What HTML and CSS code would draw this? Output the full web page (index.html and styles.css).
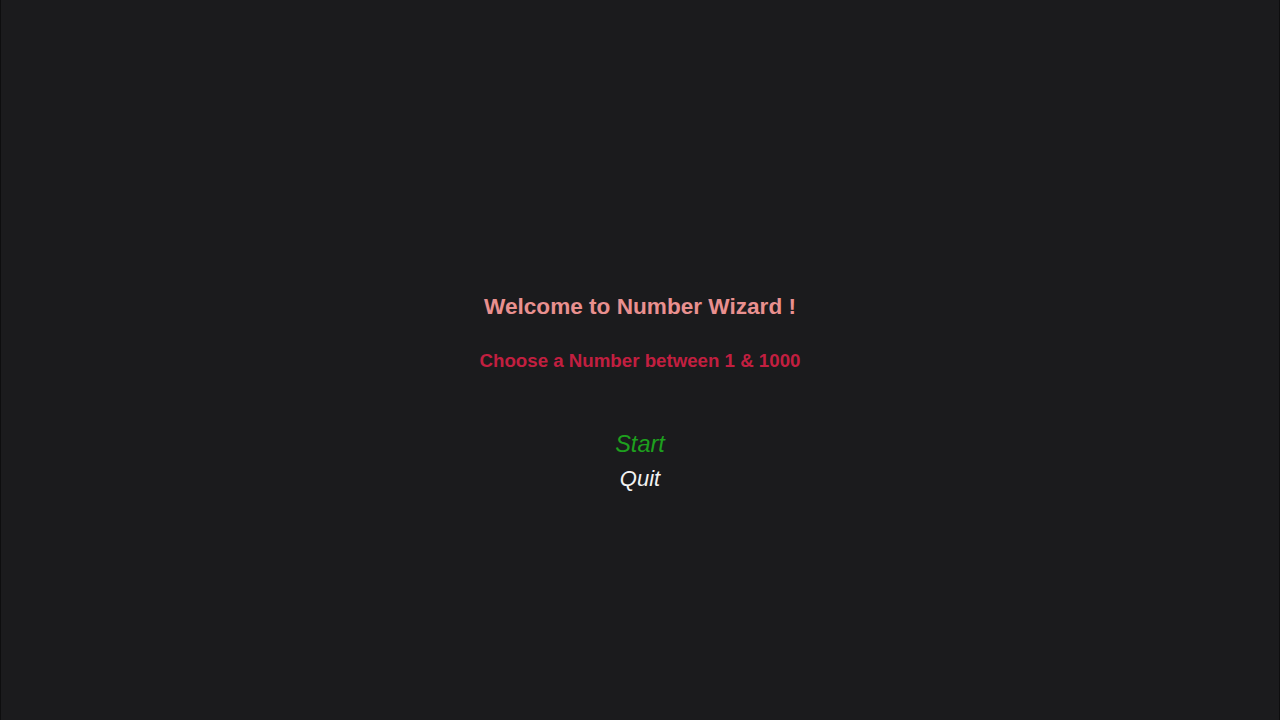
FILE: index.html
```html
<!DOCTYPE html>
<html>
<head>
<meta charset="utf-8">
<link rel="stylesheet" href="styles.css">
</head>
<body>
<main class="screen">
  <h1 class="title">Welcome to Number Wizard !</h1>
  <p class="subtitle">Choose a Number between 1 &amp; 1000</p>
  <nav class="menu">
    <span class="item start">Start</span>
    <span class="item quit">Quit</span>
  </nav>
</main>
</body>
</html>
```
FILE: styles.css
```css
html, body {
  margin: 0;
  padding: 0;
  width: 1280px;
  height: 720px;
  overflow: hidden;
  background: #0e0e0f;
}
.screen {
  box-sizing: border-box;
  width: 1278px;
  height: 720px;
  margin-left: 1px;
  background: #1b1b1d;
  display: flex;
  flex-direction: column;
  align-items: center;
  font-family: "Liberation Sans", Arial, sans-serif;
  padding-top: 294px;
}
.title {
  margin: 0;
  font-size: 22.6px;
  font-weight: bold;
  line-height: 26px;
  color: #e9908f;
}
.subtitle {
  margin: 30px 0 0 0;
  font-size: 18.7px;
  font-weight: bold;
  line-height: 22px;
  color: #c21f40;
}
.menu {
  margin-top: 55px;
  display: flex;
  flex-direction: column;
  align-items: center;
}
.item {
  font-style: italic;
}
.start { color: #1ea01e; font-size: 23.5px; line-height: 35px; }
.quit { color: #f2f2f2; font-size: 22px; line-height: 33px; }
```
